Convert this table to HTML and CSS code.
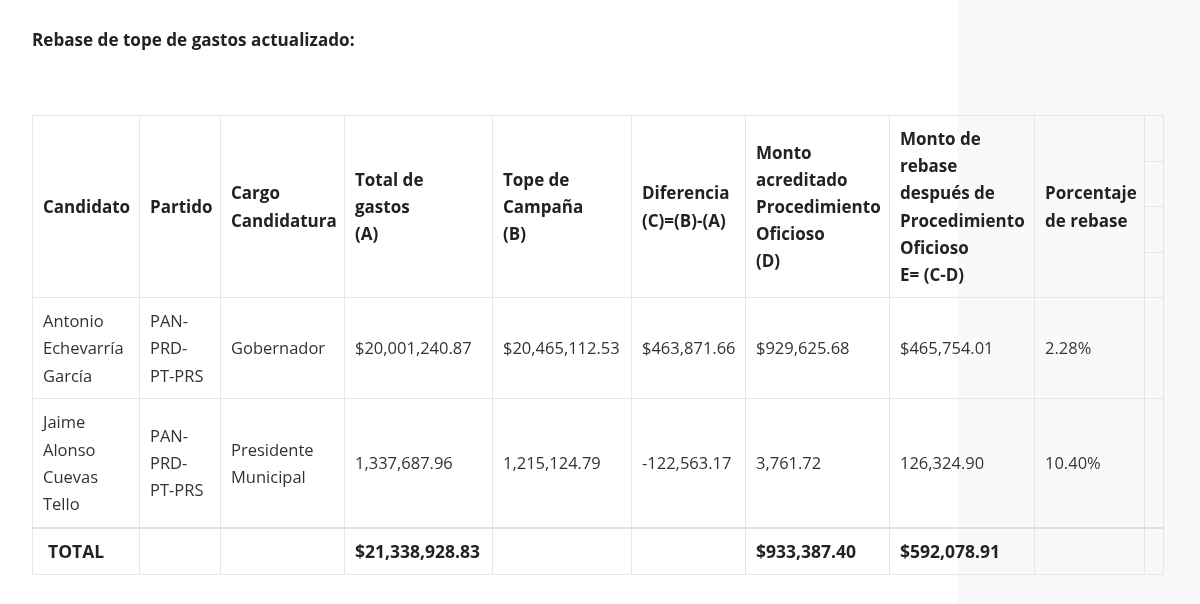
FILE: index.html
```html
<!DOCTYPE html>
<html lang="es">
<head>
<meta charset="utf-8">
<title>Rebase de tope de gastos</title>
<link rel="stylesheet" href="styles.css">
</head>
<body>
<main class="page">
  <h2 class="title">Rebase de tope de gastos actualizado:</h2>
  <table class="gastos">
    <colgroup>
      <col class="c1"><col class="c2"><col class="c3"><col class="c4"><col class="c5">
      <col class="c6"><col class="c7"><col class="c8"><col class="c9"><col class="c10">
    </colgroup>
    <thead>
      <tr>
        <th rowspan="4">Candidato</th>
        <th rowspan="4">Partido</th>
        <th rowspan="4">Cargo<br>Candidatura</th>
        <th rowspan="4">Total de<br>gastos<br>(A)</th>
        <th rowspan="4">Tope de<br>Campaña<br>(B)</th>
        <th rowspan="4">Diferencia<br>(C)=(B)-(A)</th>
        <th rowspan="4">Monto<br>acreditado<br>Procedimiento<br>Oficioso<br>(D)</th>
        <th rowspan="4">Monto de<br>rebase<br>después de<br>Procedimiento<br>Oficioso<br>E= (C-D)</th>
        <th rowspan="4">Porcentaje<br>de rebase</th>
        <th class="stub"></th>
      </tr>
      <tr><th class="stub"></th></tr>
      <tr><th class="stub"></th></tr>
      <tr><th class="stub"></th></tr>
    </thead>
    <tbody>
      <tr>
        <td>Antonio<br>Echevarría<br>García</td>
        <td>PAN-<br>PRD-<br>PT-PRS</td>
        <td>Gobernador</td>
        <td>$20,001,240.87</td>
        <td>$20,465,112.53</td>
        <td>$463,871.66</td>
        <td>$929,625.68</td>
        <td>$465,754.01</td>
        <td>2.28%</td>
        <td></td>
      </tr>
      <tr class="tall">
        <td>Jaime<br>Alonso<br>Cuevas<br>Tello</td>
        <td>PAN-<br>PRD-<br>PT-PRS</td>
        <td>Presidente<br>Municipal</td>
        <td>1,337,687.96</td>
        <td>1,215,124.79</td>
        <td>-122,563.17</td>
        <td>3,761.72</td>
        <td>126,324.90</td>
        <td>10.40%</td>
        <td></td>
      </tr>
      <tr class="total">
        <td class="total-label">TOTAL</td>
        <td></td>
        <td></td>
        <td>$21,338,928.83</td>
        <td></td>
        <td></td>
        <td>$933,387.40</td>
        <td>$592,078.91</td>
        <td></td>
        <td></td>
      </tr>
    </tbody>
  </table>
</main>
<div class="fade"></div>
</body>
</html>
```

FILE: styles.css
```css
html, body {
  margin: 0;
  padding: 0;
  background: #ffffff;
}

body {
  font-family: "Open Sans", "Noto Sans", "Liberation Sans", sans-serif;
  color: #333333;
  width: 1200px;
  height: 604px;
  overflow: hidden;
  position: relative;
}

.page {
  padding: 28px 32px 0 32px;
}

.title {
  margin: 0 0 63px 0;
  font-size: 17.1px;
  line-height: 24px;
  font-weight: 700;
  color: #222222;
}

.gastos {
  border-collapse: collapse;
  table-layout: fixed;
  width: 1131px;
  font-size: 16.5px;
  line-height: 27.2px;
}

.c1 { width: 107px; }
.c2 { width: 81px; }
.c3 { width: 124px; }
.c4 { width: 148px; }
.c5 { width: 139px; }
.c6 { width: 114px; }
.c7 { width: 144px; }
.c8 { width: 145px; }
.c9 { width: 110px; }
.c10 { width: 19px; }

.gastos th,
.gastos td {
  border: 1px solid #e6e6e6;
  padding: 9px 6px 9px 10px;
  text-align: left;
  vertical-align: middle;
  white-space: nowrap;
}

.gastos th {
  font-size: 17px;
  font-weight: 700;
  color: #222222;
}

.gastos th.stub {
  padding: 0;
  height: 44px;
}

.gastos td {
  color: #333333;
}

.tall td {
  padding-top: 9.5px;
  padding-bottom: 9.5px;
}

.total td {
  border-top: 2px solid #e2e2e2;
  font-weight: 700;
  font-size: 17.5px;
  padding-top: 9px;
  padding-bottom: 9px;
  color: #222222;
}

.gastos td.total-label {
  padding-left: 15px;
}

.fade {
  position: absolute;
  top: 0;
  left: 957px;
  width: 243px;
  height: 604px;
  background: #f9f9f9;
  mix-blend-mode: darken;
  pointer-events: none;
}
```
